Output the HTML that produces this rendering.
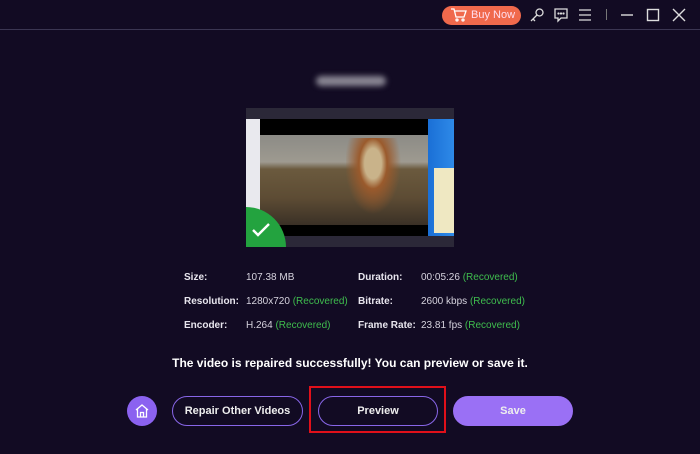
<!DOCTYPE html>
<html><head><meta charset="utf-8"><style>
*{margin:0;padding:0;box-sizing:border-box}
body{width:700px;height:454px;background:#120b23;font-family:"Liberation Sans",sans-serif;position:relative;overflow:hidden;color:#fff}
.abs{position:absolute}
.line{left:0;top:29px;width:700px;height:1px;background:#3b3652}
.buy{left:442px;top:6px;width:79px;height:19px;border-radius:9.5px;background:#f0694c;color:#fde;font-size:11px;line-height:19px;padding-left:29px}
.lbl{font-size:10px;font-weight:bold;color:#e8e6ee}
.val{font-size:10px;color:#d6d3de}
.g{color:#3fbd4e}
.btn{top:396px;height:30px;border-radius:15px;border:1.5px solid #8866e8;font-size:11px;font-weight:bold;text-align:center;line-height:28px;color:#eee}
</style></head><body>
<div class="abs line"></div>
<div class="abs buy">Buy Now</div>
<svg class="abs" style="left:450px;top:8px" width="18" height="14" viewBox="0 0 18 14" fill="none" stroke="#fff" stroke-width="1.3"><path d="M1 1h3l2 8h8l2-6H5"/><circle cx="7" cy="12" r="1"/><circle cx="13" cy="12" r="1"/></svg>
<svg class="abs" style="left:529px;top:7px" width="16" height="16" viewBox="0 0 16 16" fill="none" stroke="#ddd" stroke-width="1.3"><circle cx="10.5" cy="5.5" r="3.5"/><path d="M8 8l-6 6M4 12l2 2"/></svg>
<svg class="abs" style="left:553px;top:7px" width="16" height="16" viewBox="0 0 16 16" fill="none" stroke="#ddd" stroke-width="1.3"><path d="M2 2h12v9H8l-3 3v-3H2z"/><circle cx="5.5" cy="6.5" r=".5" fill="#ddd"/><circle cx="8" cy="6.5" r=".5" fill="#ddd"/><circle cx="10.5" cy="6.5" r=".5" fill="#ddd"/></svg>
<svg class="abs" style="left:578px;top:8px" width="14" height="14" viewBox="0 0 14 14" stroke="#ddd" stroke-width="1.3"><path d="M1 2h12M1 7h12M1 12h12"/></svg>
<div class="abs" style="left:606px;top:9px;width:1px;height:11px;background:#777"></div>
<svg class="abs" style="left:620px;top:8px" width="14" height="14" stroke="#ddd" stroke-width="1.4"><path d="M1 7h12"/></svg>
<svg class="abs" style="left:646px;top:8px" width="14" height="14" fill="none" stroke="#ddd" stroke-width="1.4"><rect x="1.5" y="1.5" width="11" height="11"/></svg>
<svg class="abs" style="left:672px;top:8px" width="14" height="14" stroke="#ddd" stroke-width="1.4"><path d="M1 1l12 12M13 1L1 13"/></svg>

<div class="abs" style="left:316px;top:76px;width:70px;height:10px;border-radius:5px;background:#8a8794;filter:blur(3px)"></div>

<div class="abs" style="left:246px;top:108px;width:208px;height:139px;background:#2b2838;overflow:hidden">
 <div class="abs" style="left:0;top:11px;width:14px;height:117px;background:#e9e9ee"></div>
 <div class="abs" style="left:14px;top:11px;width:168px;height:117px;background:#000"></div>
 <div class="abs" style="left:14px;top:27px;width:168px;height:90px;background:linear-gradient(180deg,#8c8b86 0%,#9e9a90 30%,#6b5a3e 38%,#5d4c34 70%,#3a3026 100%)"></div>
 <div class="abs" style="left:100px;top:30px;width:60px;height:85px;background:radial-gradient(ellipse at 45% 30%,#c9b38a 0 18%,#9a5a2c 30%,transparent 60%)"></div>
 <div class="abs" style="left:182px;top:11px;width:26px;height:117px;background:linear-gradient(90deg,#1a6fd6,#2e8ae8)"></div>
 <div class="abs" style="left:188px;top:60px;width:20px;height:65px;background:#efe8c2"></div>
 <div class="abs" style="left:-40px;top:99px;width:80px;height:80px;border-radius:50%;background:#23a33f"></div>
 <svg class="abs" style="left:6px;top:115px" width="18" height="14" fill="none" stroke="#fff" stroke-width="2.4"><path d="M1 7l5 5 11-11"/></svg>
</div>

<div class="abs lbl" style="left:184px;top:272px">Size:</div>
<div class="abs val" style="left:246px;top:272px">107.38 MB</div>
<div class="abs lbl" style="left:358px;top:272px">Duration:</div>
<div class="abs val" style="left:421px;top:272px">00:05:26 <span class="g">(Recovered)</span></div>
<div class="abs lbl" style="left:184px;top:296px">Resolution:</div>
<div class="abs val" style="left:246px;top:296px">1280x720 <span class="g">(Recovered)</span></div>
<div class="abs lbl" style="left:358px;top:296px">Bitrate:</div>
<div class="abs val" style="left:421px;top:296px">2600 kbps <span class="g">(Recovered)</span></div>
<div class="abs lbl" style="left:184px;top:320px">Encoder:</div>
<div class="abs val" style="left:246px;top:320px">H.264 <span class="g">(Recovered)</span></div>
<div class="abs lbl" style="left:358px;top:320px">Frame Rate:</div>
<div class="abs val" style="left:421px;top:320px">23.81 fps <span class="g">(Recovered)</span></div>

<div class="abs" style="left:0;top:356px;width:700px;text-align:center;font-size:12px;font-weight:bold;color:#fff">The video is repaired successfully! You can preview or save it.</div>

<div class="abs" style="left:127px;top:396px;width:30px;height:30px;border-radius:50%;background:#8b62f0"></div>
<svg class="abs" style="left:134px;top:403px" width="16" height="16" fill="none" stroke="#fff" stroke-width="1.3"><path d="M2 7l6-5 6 5M3.5 6v8h9V6M6.5 14V9.5h3V14"/></svg>
<div class="abs btn" style="left:172px;width:131px">Repair Other Videos</div>
<div class="abs btn" style="left:318px;width:120px">Preview</div>
<div class="abs" style="left:309px;top:386px;width:137px;height:47px;border:2px solid #e0101a"></div>
<div class="abs btn" style="left:453px;width:120px;background:#9a70f5;border-color:#9a70f5">Save</div>
</body></html>
